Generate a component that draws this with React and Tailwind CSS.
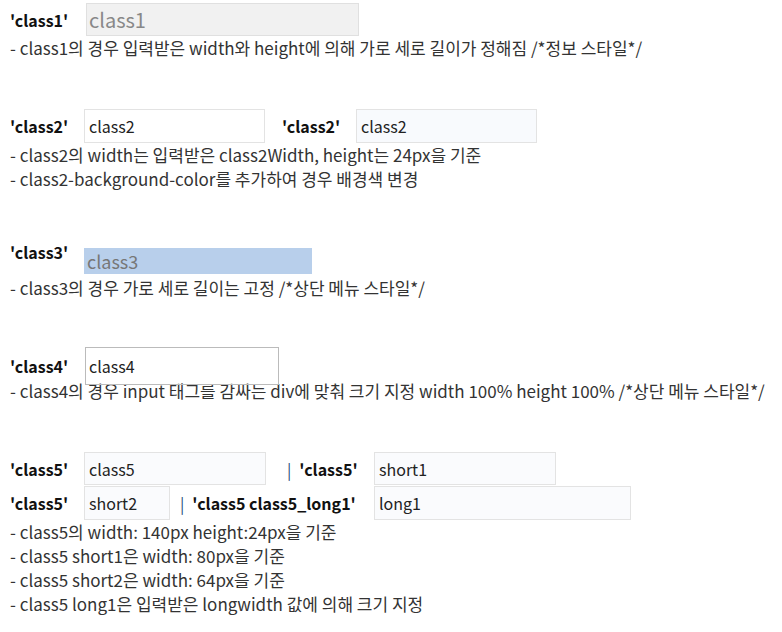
export default function App() {
  const font = { fontFamily: '"Noto Sans CJK KR", "Noto Sans", sans-serif' };
  const label = "text-[16px] font-bold text-[#111] leading-[24px]";
  const desc = "text-[17px] text-[#333] leading-[24px] whitespace-nowrap";
  const box = "border border-[#e3e3e3] text-[16px] text-[#222] pl-[4px] flex items-center";

  return (
    <div style={font} className="w-[782px] h-[632px] bg-white pl-[10px] relative">
      {/* class1 */}
      <div className="flex items-center pt-[3px]">
        <span className={`${label} w-[76px]`}>'class1'</span>
        <div className="w-[273px] h-[33px] bg-[#f1f1f1] border border-[#e0e0e0] text-[20px] text-[#888] pl-[2px] flex items-center">
          class1
        </div>
      </div>
      <p className={desc}>- class1의 경우 입력받은 width와 height에 의해 가로 세로 길이가 정해짐 /*정보 스타일*/</p>

      {/* class2 */}
      <div className="flex items-center mt-[49px]">
        <span className={`${label} w-[74px]`}>'class2'</span>
        <div className={`${box} w-[181px] h-[34px] bg-white`}>class2</div>
        <span className={`${label} w-[74px] ml-[17px]`}>'class2'</span>
        <div className={`${box} w-[181px] h-[34px] bg-[#f8fafd]`}>class2</div>
      </div>
      <p className={desc}>- class2의 width는 입력받은 class2Width, height는 24px을 기준</p>
      <p className={desc}>- class2-background-color를 추가하여 경우 배경색 변경</p>

      {/* class3 */}
      <div className="flex items-start mt-[49px]">
        <span className={`${label} w-[74px]`}>'class3'</span>
        <div className="w-[228px] h-[26px] mt-[8px] bg-[#b8cfeb] text-[18px] text-[#777] pl-[3px] flex items-center">
          class3
        </div>
      </div>
      <p className={`${desc} mt-[2px]`}>- class3의 경우 가로 세로 길이는 고정 /*상단 메뉴 스타일*/</p>

      {/* class4 */}
      <div className="flex items-center mt-[47px] relative z-10">
        <span className={`${label} w-[75px]`}>'class4'</span>
        <div className="w-[194px] h-[38px] border border-[#bbbbbb] text-[16px] text-[#222] pl-[3px] flex items-center">
          class4
        </div>
      </div>
      <p className={`${desc} -mt-[6px]`}>- class4의 경우 input 태그를 감싸는 div에 맞춰 크기 지정 width 100% height 100% /*상단 메뉴 스타일*/</p>

      {/* class5 */}
      <div className="flex items-center mt-[49px]">
        <div className="w-[364px] flex items-center">
          <span className={`${label} w-[74px]`}>'class5'</span>
          <div className={`${box} w-[182px] h-[33px] bg-[#fafbfd]`}>class5</div>
          <span className="ml-[21px] text-[16px] text-[#2a4a7a]">|</span>
          <span className={`${label} ml-[8px]`}>'class5'</span>
        </div>
        <div className={`${box} w-[182px] h-[33px] bg-[#fafbfd]`}>short1</div>
      </div>
      <div className="flex items-center mt-[1px]">
        <div className="w-[364px] flex items-center">
          <span className={`${label} w-[74px]`}>'class5'</span>
          <div className={`${box} w-[86px] h-[34px] bg-[#fafbfd]`}>short2</div>
          <span className="ml-[10px] text-[16px] text-[#2a4a7a]">|</span>
          <span className={`${label} ml-[8px]`}>'class5 class5_long1'</span>
        </div>
        <div className={`${box} w-[257px] h-[34px] bg-[#fafbfd]`}>long1</div>
      </div>
      <p className={desc}>- class5의 width: 140px height:24px을 기준</p>
      <p className={desc}>- class5 short1은 width: 80px을 기준</p>
      <p className={desc}>- class5 short2은 width: 64px을 기준</p>
      <p className={desc}>- class5 long1은 입력받은 longwidth 값에 의해 크기 지정</p>
    </div>
  );
}
